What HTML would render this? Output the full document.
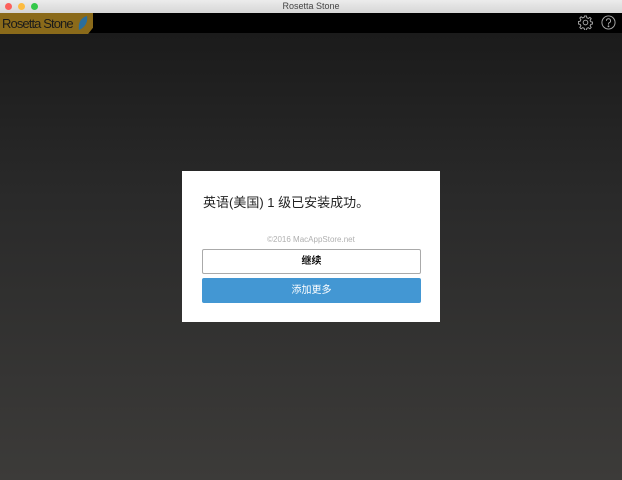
<!DOCTYPE html>
<html><head><meta charset="utf-8"><style>
*{margin:0;padding:0;box-sizing:border-box}
body{width:622px;height:480px;overflow:hidden;position:relative;font-family:"Liberation Sans","Noto Sans CJK SC",sans-serif;background:linear-gradient(#1b1b1b 34px,#2a2a2a 200px,#3c3b39 480px)}
.tb{position:absolute;left:0;top:0;width:622px;height:13px;background:linear-gradient(#ececec,#d6d6d6);font-size:9px;color:#444;text-align:center;line-height:13px}
.dot{position:absolute;top:3px;width:7px;height:7px;border-radius:50%}
.bar{position:absolute;top:13px;left:0;width:622px;height:20px;background:#000}
.logo{position:absolute;top:13px;left:0;width:93px;height:21px;background:#8a6a1a;clip-path:polygon(0 0,100% 0,100% 70%,88px 100%,0 100%)}
.logo span{position:absolute;left:2px;top:3px;font-size:13px;color:#1a1a1a;letter-spacing:-0.9px}
.dlg{position:absolute;left:182px;top:171px;width:258px;height:151px;background:#fff}
.h{position:absolute;left:21px;top:21px;font-size:13px;color:#222}
.cp{position:absolute;left:0;width:100%;top:64px;text-align:center;font-size:8px;color:#b0b0b0}
.b1{position:absolute;left:20px;top:78px;width:219px;height:25px;border:1px solid #aaa;border-radius:2px;text-align:center;line-height:23px;font-size:10px;font-weight:bold;color:#111}
.b2{position:absolute;left:20px;top:107px;width:219px;height:25px;background:#4397d3;border-radius:2px;text-align:center;line-height:25px;font-size:10px;color:#fff}
</style></head><body>
<div class="tb">Rosetta Stone</div>
<div class="dot" style="left:5px;background:#fc605b"></div>
<div class="dot" style="left:18px;background:#fdbc40"></div>
<div class="dot" style="left:31px;background:#34c84a"></div>
<div class="bar"></div>
<div class="logo"><span>Rosetta Stone</span>
<svg style="position:absolute;left:77px;top:2px" width="12" height="16" viewBox="0 0 12 16"><path d="M2 15 C1 9 3 3 10 1 C11 6 9 12 2 15Z" fill="#2a6e9c"/></svg></div>
<svg style="position:absolute;left:578px;top:15px" width="15" height="15" viewBox="0 0 16 16" fill="none" stroke="#aaa" stroke-width="1"><circle cx="8" cy="8" r="2.5"/><path d="M7 1h2l.4 2 1.6.7 1.7-1.2 1.4 1.4-1.2 1.7.7 1.6 2 .4v2l-2 .4-.7 1.6 1.2 1.7-1.4 1.4-1.7-1.2-1.6.7-.4 2H7l-.4-2-1.6-.7-1.7 1.2-1.4-1.4 1.2-1.7-.7-1.6-2-.4V7l2-.4.7-1.6-1.2-1.7 1.4-1.4 1.7 1.2 1.6-.7z"/></svg>
<svg style="position:absolute;left:601px;top:15px" width="15" height="15" viewBox="0 0 16 16" fill="none" stroke="#aaa" stroke-width="1"><circle cx="8" cy="8" r="7"/><path d="M5.8 6.2a2.2 2.2 0 1 1 3 2c-.6.3-.8.7-.8 1.4v.6"/><circle cx="8" cy="12" r=".5" fill="#aaa"/></svg>
<div class="dlg">
<div class="h">英语(美国) 1 级已安装成功。</div>
<div class="cp">©2016 MacAppStore.net</div>
<div class="b1">继续</div>
<div class="b2">添加更多</div>
</div>
</body></html>
